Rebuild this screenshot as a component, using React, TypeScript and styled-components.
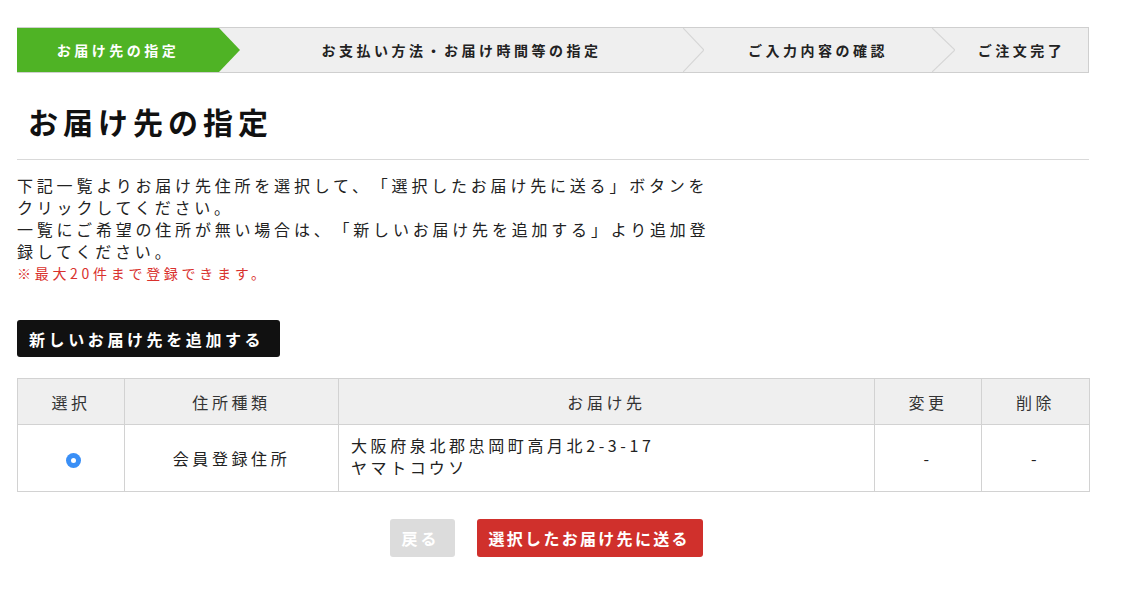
import React from "react";
import styled, { createGlobalStyle } from "styled-components";

const Global = createGlobalStyle`
  html, body { margin: 0; padding: 0; background: #fff; }
  body {
    font-family: "Noto Sans CJK JP", "Noto Sans", sans-serif;
    color: #222;
    text-spacing-trim: space-all;
  }
  * { box-sizing: border-box; }
`;

const Page = styled.div`
  width: 1072px;
  margin: 0 0 0 17px;
  padding-top: 27px;
`;

const Steps = styled.ol`
  list-style: none;
  margin: 0;
  padding: 0;
  display: flex;
  height: 46px;
  background: #efefef;
  border-top: 1px solid #cfcfcf;
  border-bottom: 1px solid #cfcfcf;
  border-right: 1px solid #cfcfcf;
`;

const Step = styled.li<{ $w: number; $arrow: number; $active?: boolean }>`
  position: relative;
  width: ${(p) => p.$w}px;
  flex: none;
  height: 44px;
  padding-right: ${(p) => p.$arrow}px;
  display: flex;
  align-items: center;
  justify-content: center;
  font-size: 14px;
  font-weight: 700;
  letter-spacing: 3.5px;
  color: ${(p) => (p.$active ? "#fff" : "#222")};
  z-index: ${(p) => (p.$active ? 2 : 1)};
`;

const StepLabel = styled.span`
  position: relative;
  z-index: 1;
`;

const StepFill = styled.span`
  position: absolute;
  left: 0;
  top: 0;
  bottom: 0;
  right: 0;
`;

const ArrowSvg = styled.svg`
  position: absolute;
  top: 0;
  right: 0;
  height: 44px;
`;

const Heading = styled.h1`
  margin: 0;
  padding: 28px 0 18px 11px;
  border-bottom: 1px solid #d9d9d9;
  font-size: 30px;
  line-height: 40px;
  font-weight: 700;
  letter-spacing: 5px;
  color: #111;
`;

const Intro = styled.div`
  margin-top: 14px;
  width: 706px;
  font-size: 16px;
  line-height: 22px;
  letter-spacing: 3.8px;
  color: #222;
`;

const Note = styled.p`
  margin: 0;
  font-size: 14px;
  line-height: 22px;
  letter-spacing: 3.7px;
  color: #d9312d;
`;

const Para = styled.p`
  margin: 0;
`;

const DarkButton = styled.button`
  display: block;
  margin-top: 36px;
  height: 37px;
  padding: 0 12px 0 12px;
  width: 263px;
  text-align: left;
  border: none;
  border-radius: 3px;
  background: #111;
  color: #fff;
  font-family: inherit;
  font-size: 16px;
  font-weight: 700;
  letter-spacing: 3.6px;
  cursor: pointer;
`;

const Table = styled.table`
  margin-top: 21px;
  width: 1072px;
  border-collapse: collapse;
  table-layout: fixed;
  font-size: 16px;
  letter-spacing: 3.6px;
  color: #222;
`;

const Th = styled.th<{ $w: number }>`
  width: ${(p) => p.$w}px;
  height: 46px;
  background: #efefef;
  border: 1px solid #d2d2d2;
  font-weight: 400;
  text-align: center;
  padding: 0;
  color: #333;
`;

const Td = styled.td<{ $align?: string }>`
  height: 67px;
  border: 1px solid #d2d2d2;
  padding: 9px 12px;
  line-height: 22px;
  text-align: ${(p) => p.$align || "center"};
  vertical-align: ${(p) => (p.$align === "left" ? "top" : "middle")};
`;

const Radio = styled.span`
  display: inline-block;
  width: 15px;
  height: 15px;
  border-radius: 50%;
  background: #3a8ff6;
  position: relative;
  top: 3px;
  left: 2px;
  &::after {
    content: "";
    position: absolute;
    left: 5px;
    top: 5px;
    width: 5px;
    height: 5px;
    border-radius: 50%;
    background: #fff;
  }
`;

const Actions = styled.div`
  margin-top: 27px;
  display: flex;
  justify-content: center;
  gap: 22px;
  padding-right: 14px;
`;

const ActionButton = styled.button<{ $variant: "back" | "primary" }>`
  height: 38px;
  width: ${(p) => (p.$variant === "back" ? "65px" : "226px")};
  padding: 0 0 0 12px;
  text-align: left;
  border: none;
  border-radius: 3px;
  background: ${(p) => (p.$variant === "back" ? "#dcdcdc" : "#d0302c")};
  color: #fff;
  font-family: inherit;
  font-size: 16px;
  font-weight: 700;
  letter-spacing: ${(p) => (p.$variant === "back" ? "3px" : "2.3px")};
  cursor: pointer;
`;

const steps = [
  { label: "お届け先の指定", w: 223, arrow: 21, active: true },
  { label: "お支払い方法・お届け時間等の指定", w: 464, arrow: 21 },
  { label: "ご入力内容の確認", w: 251, arrow: 23 },
  { label: "ご注文完了", w: 133, arrow: 0 },
];

export default function App() {
  return (
    <>
      <Global />
      <Page>
        <Steps>
          {steps.map((s) => (
            <Step key={s.label} $w={s.w} $arrow={s.arrow} $active={s.active}>
              {s.active && (
                <StepFill>
                  <svg width={s.w} height={44} style={{ display: "block" }}>
                    <polygon
                      points={`0,0 ${s.w - s.arrow},0 ${s.w},22 ${s.w - s.arrow},44 0,44`}
                      fill="#4fb325"
                    />
                  </svg>
                </StepFill>
              )}
              {!s.active && s.arrow > 0 && (
                <ArrowSvg width={s.arrow} viewBox={`0 0 ${s.arrow} 44`}>
                  <polyline
                    points={`0,0 ${s.arrow},22 0,44`}
                    fill="none"
                    stroke="#d6d6d6"
                    strokeWidth="1.2"
                  />
                </ArrowSvg>
              )}
              <StepLabel>{s.label}</StepLabel>
            </Step>
          ))}
        </Steps>

        <Heading>お届け先の指定</Heading>

        <Intro>
          <Para>
            下記一覧よりお届け先住所を選択して、「選択したお届け先に送る」ボタンをクリックしてください。
          </Para>
          <Para>
            一覧にご希望の住所が無い場合は、「新しいお届け先を追加する」より追加登録してください。
          </Para>
          <Note>※最大20件まで登録できます。</Note>
        </Intro>

        <DarkButton>新しいお届け先を追加する</DarkButton>

        <Table>
          <thead>
            <tr>
              <Th $w={107}>選択</Th>
              <Th $w={214}>住所種類</Th>
              <Th $w={536}>お届け先</Th>
              <Th $w={107}>変更</Th>
              <Th $w={108}>削除</Th>
            </tr>
          </thead>
          <tbody>
            <tr>
              <Td>
                <Radio />
              </Td>
              <Td>会員登録住所</Td>
              <Td $align="left">
                大阪府泉北郡忠岡町高月北2-3-17
                <br />
                ヤマトコウソ
              </Td>
              <Td>-</Td>
              <Td>-</Td>
            </tr>
          </tbody>
        </Table>

        <Actions>
          <ActionButton $variant="back">戻る</ActionButton>
          <ActionButton $variant="primary">選択したお届け先に送る</ActionButton>
        </Actions>
      </Page>
    </>
  );
}
